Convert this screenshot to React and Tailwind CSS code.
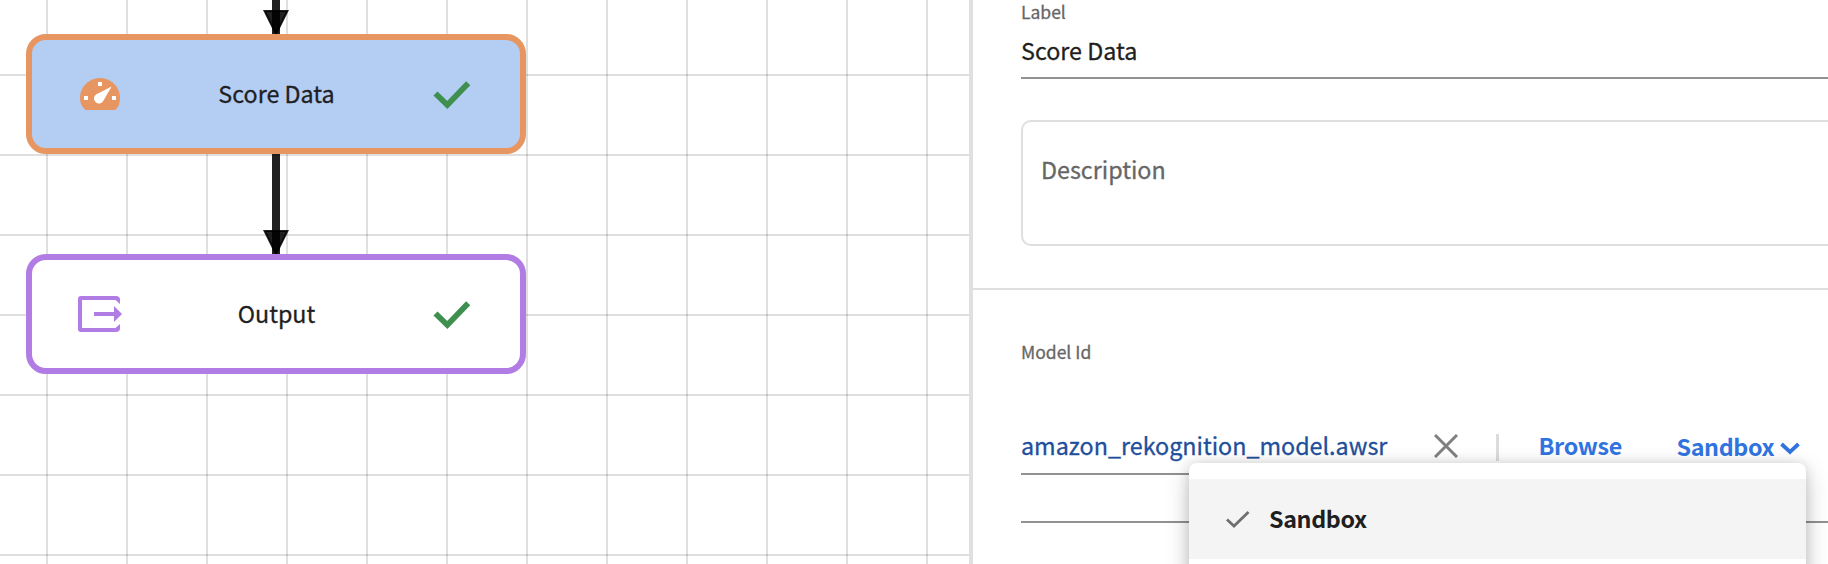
import React from "react";

function CheckIcon() {
  return (
    <svg className="h-[30px] w-[38px]" viewBox="0 0 38 30" fill="none">
      <path d="M2.500 13.500 L14.300 25 L35.200 3.200" stroke="#3f8f4f" strokeWidth="5.800" />
    </svg>
  );
}

function GaugeIcon() {
  return (
    <svg className="h-[32px] w-[44px]" viewBox="0 0 44 32">
      <path d="M8 32 C4.500 30 2 25.500 2 20 C2 9 11 0 22 0 S42 9 42 20 C42 25.500 40.500 29.500 37 32 Z" fill="#e79661" />
      <path d="M33.600 8.600 L25.400 22.800 A5 5 0 1 1 18 16.500 Z" fill="#fff" />
      <path d="M20 4h4v4h-4zM6 18h4v4H6zM34 18h4v4h-4z" fill="#fff" />
    </svg>
  );
}

function OutputIcon() {
  return (
    <svg className="h-[36px] w-[44px]" viewBox="0 0 44 36">
      <path
        d="M3 0 H38.500 Q42 .500 42 3.500 V8 L37.500 4 H4 V32 H37.500 L42 28 V32.500 Q42 35.500 38.500 36 H3 Q0 36 0 33 V3 Q0 0 3 0 Z"
        fill="#b17ce4"
      />
      <path d="M16 16 H36 V10 L44 18 L36 26 V20 H16 Z" fill="#b17ce4" />
    </svg>
  );
}

function Arrow({ className }) {
  return (
    <svg className={className} viewBox="0 0 28 100" fill="#000" fillOpacity=".87">
      <rect x="10" y="0" width="8" height="100" />
      <path d="M2.600 77 H25.400 L14 100 Z" stroke="#000" strokeOpacity=".87" strokeWidth="2" />
    </svg>
  );
}

function Node({ icon, title, className }) {
  return (
    <div className={`absolute flex h-[120px] w-[500px] items-center rounded-[20px] border-[6px] ${className}`}>
      <div className="ml-[46px] flex w-[44px] justify-center">{icon}</div>
      <div className="mb-[3px] flex-1 pr-[2px] text-center leading-[34px]">{title}</div>
      <div className="mr-[49px] mt-[2px]">
        <CheckIcon />
      </div>
    </div>
  );
}

export default function App() {
  return (
    <div className="relative flex h-[564px] w-[1828px] overflow-hidden bg-white font-['Noto_Sans_CJK_SC',sans-serif] text-[23.3px] text-[#1f1f1f] [-webkit-text-stroke:0.3px]">
      <section className="relative h-full w-[973px] shrink-0 overflow-hidden border-r-4 border-[#e0e0e0] bg-[linear-gradient(to_right,rgba(0,0,0,.125)_2px,transparent_2px),linear-gradient(to_bottom,rgba(0,0,0,.125)_2px,transparent_2px)] bg-[length:80px_80px] bg-[position:46px_74px]">
        <Arrow className="absolute left-[262px] top-[-66px] h-[100px] w-[28px]" />
        <Arrow className="absolute left-[262px] top-[154px] h-[100px] w-[28px]" />
        <Node className="left-[26px] top-[34px] border-[#e79661] bg-[#b4cdf3]" icon={<GaugeIcon />} title="Score Data" />
        <Node className="left-[26px] top-[254px] border-[#b17ce4] bg-white" icon={<OutputIcon />} title="Output" />
      </section>

      <section className="h-full flex-1 overflow-hidden">
        <div className="pl-12">
          <div className="h-6 text-[17.5px] leading-6 text-[#666]">Label</div>
          <div className="mt-[9px] h-[46px] border-b-2 border-[#919191] leading-[34px]">Score Data</div>
          <div className="-mr-5 mt-[41px] h-[126px] rounded-[10px] border-2 border-[#dfdfdf] pl-[18px] pt-[30px] leading-[34px] text-[#666]">
            Description
          </div>
        </div>
        <div className="mt-[42px] h-[2px] bg-[#e0e0e0]" />
        <div className="pl-12">
          <div className="mt-[50px] h-6 text-[17.5px] leading-6 text-[#666]">Model Id</div>
          <div className="mt-[64px] flex h-[47px]">
            <div className="flex w-[475px] justify-between border-b-2 border-[#919191]">
              <div className="whitespace-nowrap leading-[34px] text-[#1f4f9c]">amazon_rekognition_model.awsr</div>
              <svg className="mr-[38px] mt-[6px] h-6 w-6" viewBox="0 0 24 24" fill="none" stroke="#808080" strokeWidth="3">
                <path d="M1 1 L23 23 M23 1 L1 23" />
              </svg>
            </div>
            <div className="mt-[6px] h-[27px] w-[2.500px] bg-[#dcdcdc]" />
            <div className="ml-[40px] w-[138px] font-bold leading-[34px] tracking-[-0.3px] text-[#3174e0] [-webkit-text-stroke:0px]">Browse</div>
            <div className="mt-px flex font-bold leading-[34px] tracking-[-0.35px] text-[#3174e0] [-webkit-text-stroke:0px]">
              <span className="w-[103px]">Sandbox</span>
              <svg className="mt-[13px] h-[14px] w-[20px]" viewBox="0 0 20 14" fill="none" stroke="#3174e0" strokeWidth="3.800">
                <path d="M1.500 2 L10 10 L18.500 2" />
              </svg>
            </div>
          </div>
          <div className="mt-[46px] h-[2px] bg-[#919191]" />
        </div>
      </section>

      <div className="absolute left-[1189px] top-[463px] h-[180px] w-[617px] rounded-lg bg-white pt-4 shadow-[0_8px_24px_rgba(0,0,0,0.22),0_0_12px_rgba(0,0,0,0.12)]">
        <div className="flex h-20 items-center bg-[#f4f4f4] pl-[37px] font-bold tracking-[-0.35px] [-webkit-text-stroke:0px]">
          <svg className="h-[18px] w-6" viewBox="0 0 24 18" fill="none" stroke="#6f6f6f" strokeWidth="2.800">
            <path d="M1 9.500 L8 16 L22.500 2" />
          </svg>
          <span className="mb-[2px] ml-[19px] leading-[34px]">Sandbox</span>
        </div>
      </div>
    </div>
  );
}
